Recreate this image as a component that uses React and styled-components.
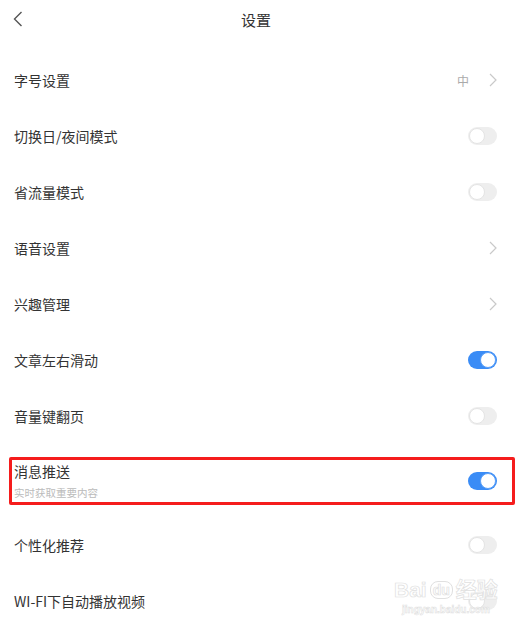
import React from "react";
import styled, { createGlobalStyle } from "styled-components";

const GlobalStyle = createGlobalStyle`
  html, body {
    margin: 0;
    padding: 0;
    background: #ffffff;
  }
  body {
    font-family: "Noto Sans CJK SC", "Noto Sans", sans-serif;
    color: #333333;
  }
`;

const items = [
  { label: "字号设置", type: "link", value: "中" },
  { label: "切换日/夜间模式", type: "toggle", on: false },
  { label: "省流量模式", type: "toggle", on: false },
  { label: "语音设置", type: "link" },
  { label: "兴趣管理", type: "link" },
  { label: "文章左右滑动", type: "toggle", on: true },
  { label: "音量键翻页", type: "toggle", on: false },
  {
    label: "消息推送",
    desc: "实时获取重要内容",
    type: "toggle",
    on: true,
    marked: true,
  },
  { label: "个性化推荐", type: "toggle", on: false },
  { label: "WI-FI下自动播放视频", type: "toggle", on: false },
];

export default function App() {
  return (
    <Page>
      <GlobalStyle />
      <Header>
        <Back>
          <svg width="10" height="16" viewBox="0 0 10 16">
            <path
              d="M8.5 1 L1.5 8 L8.5 15"
              fill="none"
              stroke="#555"
              strokeWidth="1.4"
            />
          </svg>
        </Back>
        <Title>设置</Title>
      </Header>
      <List>
        {items.map((item) =>
          item.marked ? (
            <MarkedRow key={item.label}>
              <Marked>
                <Texts>
                  <Label>{item.label}</Label>
                  <Desc>{item.desc}</Desc>
                </Texts>
                <Toggle $on={item.on} />
              </Marked>
            </MarkedRow>
          ) : (
            <Row key={item.label}>
              <Label>{item.label}</Label>
              {item.type === "toggle" ? (
                <Toggle $on={item.on} />
              ) : (
                <Trail>
                  {item.value && <Value>{item.value}</Value>}
                  <svg width="8" height="14" viewBox="0 0 8 14">
                    <path
                      d="M1 1 L7 7 L1 13"
                      fill="none"
                      stroke="#c9c9c9"
                      strokeWidth="1.2"
                    />
                  </svg>
                </Trail>
              )}
            </Row>
          )
        )}
      </List>
      <Watermark>
        <Brand>
          Bai<Paw>du</Paw>经验
        </Brand>
        <Site>jingyan.baidu.com</Site>
      </Watermark>
    </Page>
  );
}

const Page = styled.div`
  position: relative;
  width: 517px;
  height: 633px;
  overflow: hidden;
  background: #fff;
`;

const Header = styled.header`
  position: relative;
  height: 38px;
  padding-right: 5px;
  display: flex;
  align-items: center;
  justify-content: center;
`;

const Back = styled.div`
  position: absolute;
  left: 13px;
  top: 11px;
  display: flex;
`;

const Title = styled.h1`
  margin: 0;
  font-size: 15px;
  font-weight: 400;
  color: #333;
`;

const List = styled.div`
  padding-top: 14px;
  display: flex;
  flex-direction: column;
`;

const Row = styled.div`
  height: 56px;
  padding: 0 20px 0 14px;
  display: flex;
  align-items: center;
  justify-content: space-between;
`;

const MarkedRow = styled.div`
  padding: 13px 2px 12px 9px;
`;

const Marked = styled.div`
  border: 3px solid #f51c1c;
  border-radius: 2px;
  padding: 1px 15px 1px 2px;
  display: flex;
  align-items: center;
  justify-content: space-between;
`;

const Texts = styled.div`
  display: flex;
  flex-direction: column;
  gap: 3px;
`;

const Label = styled.span`
  font-size: 14px;
  line-height: 20px;
  color: #333;
`;

const Desc = styled.span`
  font-size: 10.5px;
  line-height: 17px;
  color: #bbbbbb;
`;

const Trail = styled.div`
  display: flex;
  align-items: center;
  gap: 20px;
`;

const Value = styled.span`
  font-size: 12px;
  color: #aaaaaa;
`;

const Toggle = styled.span`
  position: relative;
  width: 29px;
  height: 18px;
  border-radius: 9px;
  box-sizing: border-box;
  background: ${(p) => (p.$on ? "#3a8cf6" : "#eeeeee")};
  &::after {
    content: "";
    position: absolute;
    top: 1px;
    left: ${(p) => (p.$on ? "12px" : "1px")};
    width: 16px;
    height: 16px;
    border-radius: 50%;
    background: #fff;
    box-sizing: border-box;
    border: 1px solid ${(p) => (p.$on ? "#5a9ff7" : "#e4e4e4")};
  }
`;

const Watermark = styled.div`
  position: absolute;
  left: 394px;
  top: 578px;
  display: flex;
  flex-direction: column;
  align-items: center;
  pointer-events: none;
  font-family: "Liberation Sans", "Noto Sans CJK SC", sans-serif;
`;

const Brand = styled.div`
  font-size: 21px;
  font-weight: 700;
  line-height: 24px;
  color: rgba(255, 255, 255, 0.8);
  -webkit-text-stroke: 0.7px #e0e0e0;
  display: flex;
  align-items: center;
`;

const Paw = styled.span`
  font-size: 14px;
  margin: 0 3px;
  padding: 0 2px;
  border: 1.5px solid #e0e0e0;
  border-radius: 8px;
  line-height: 16px;
`;

const Site = styled.div`
  font-size: 10px;
  font-weight: 700;
  color: rgba(255, 255, 255, 0.8);
  -webkit-text-stroke: 0.5px #dcdcdc;
  line-height: 12px;
  margin-top: 2px;
`;
